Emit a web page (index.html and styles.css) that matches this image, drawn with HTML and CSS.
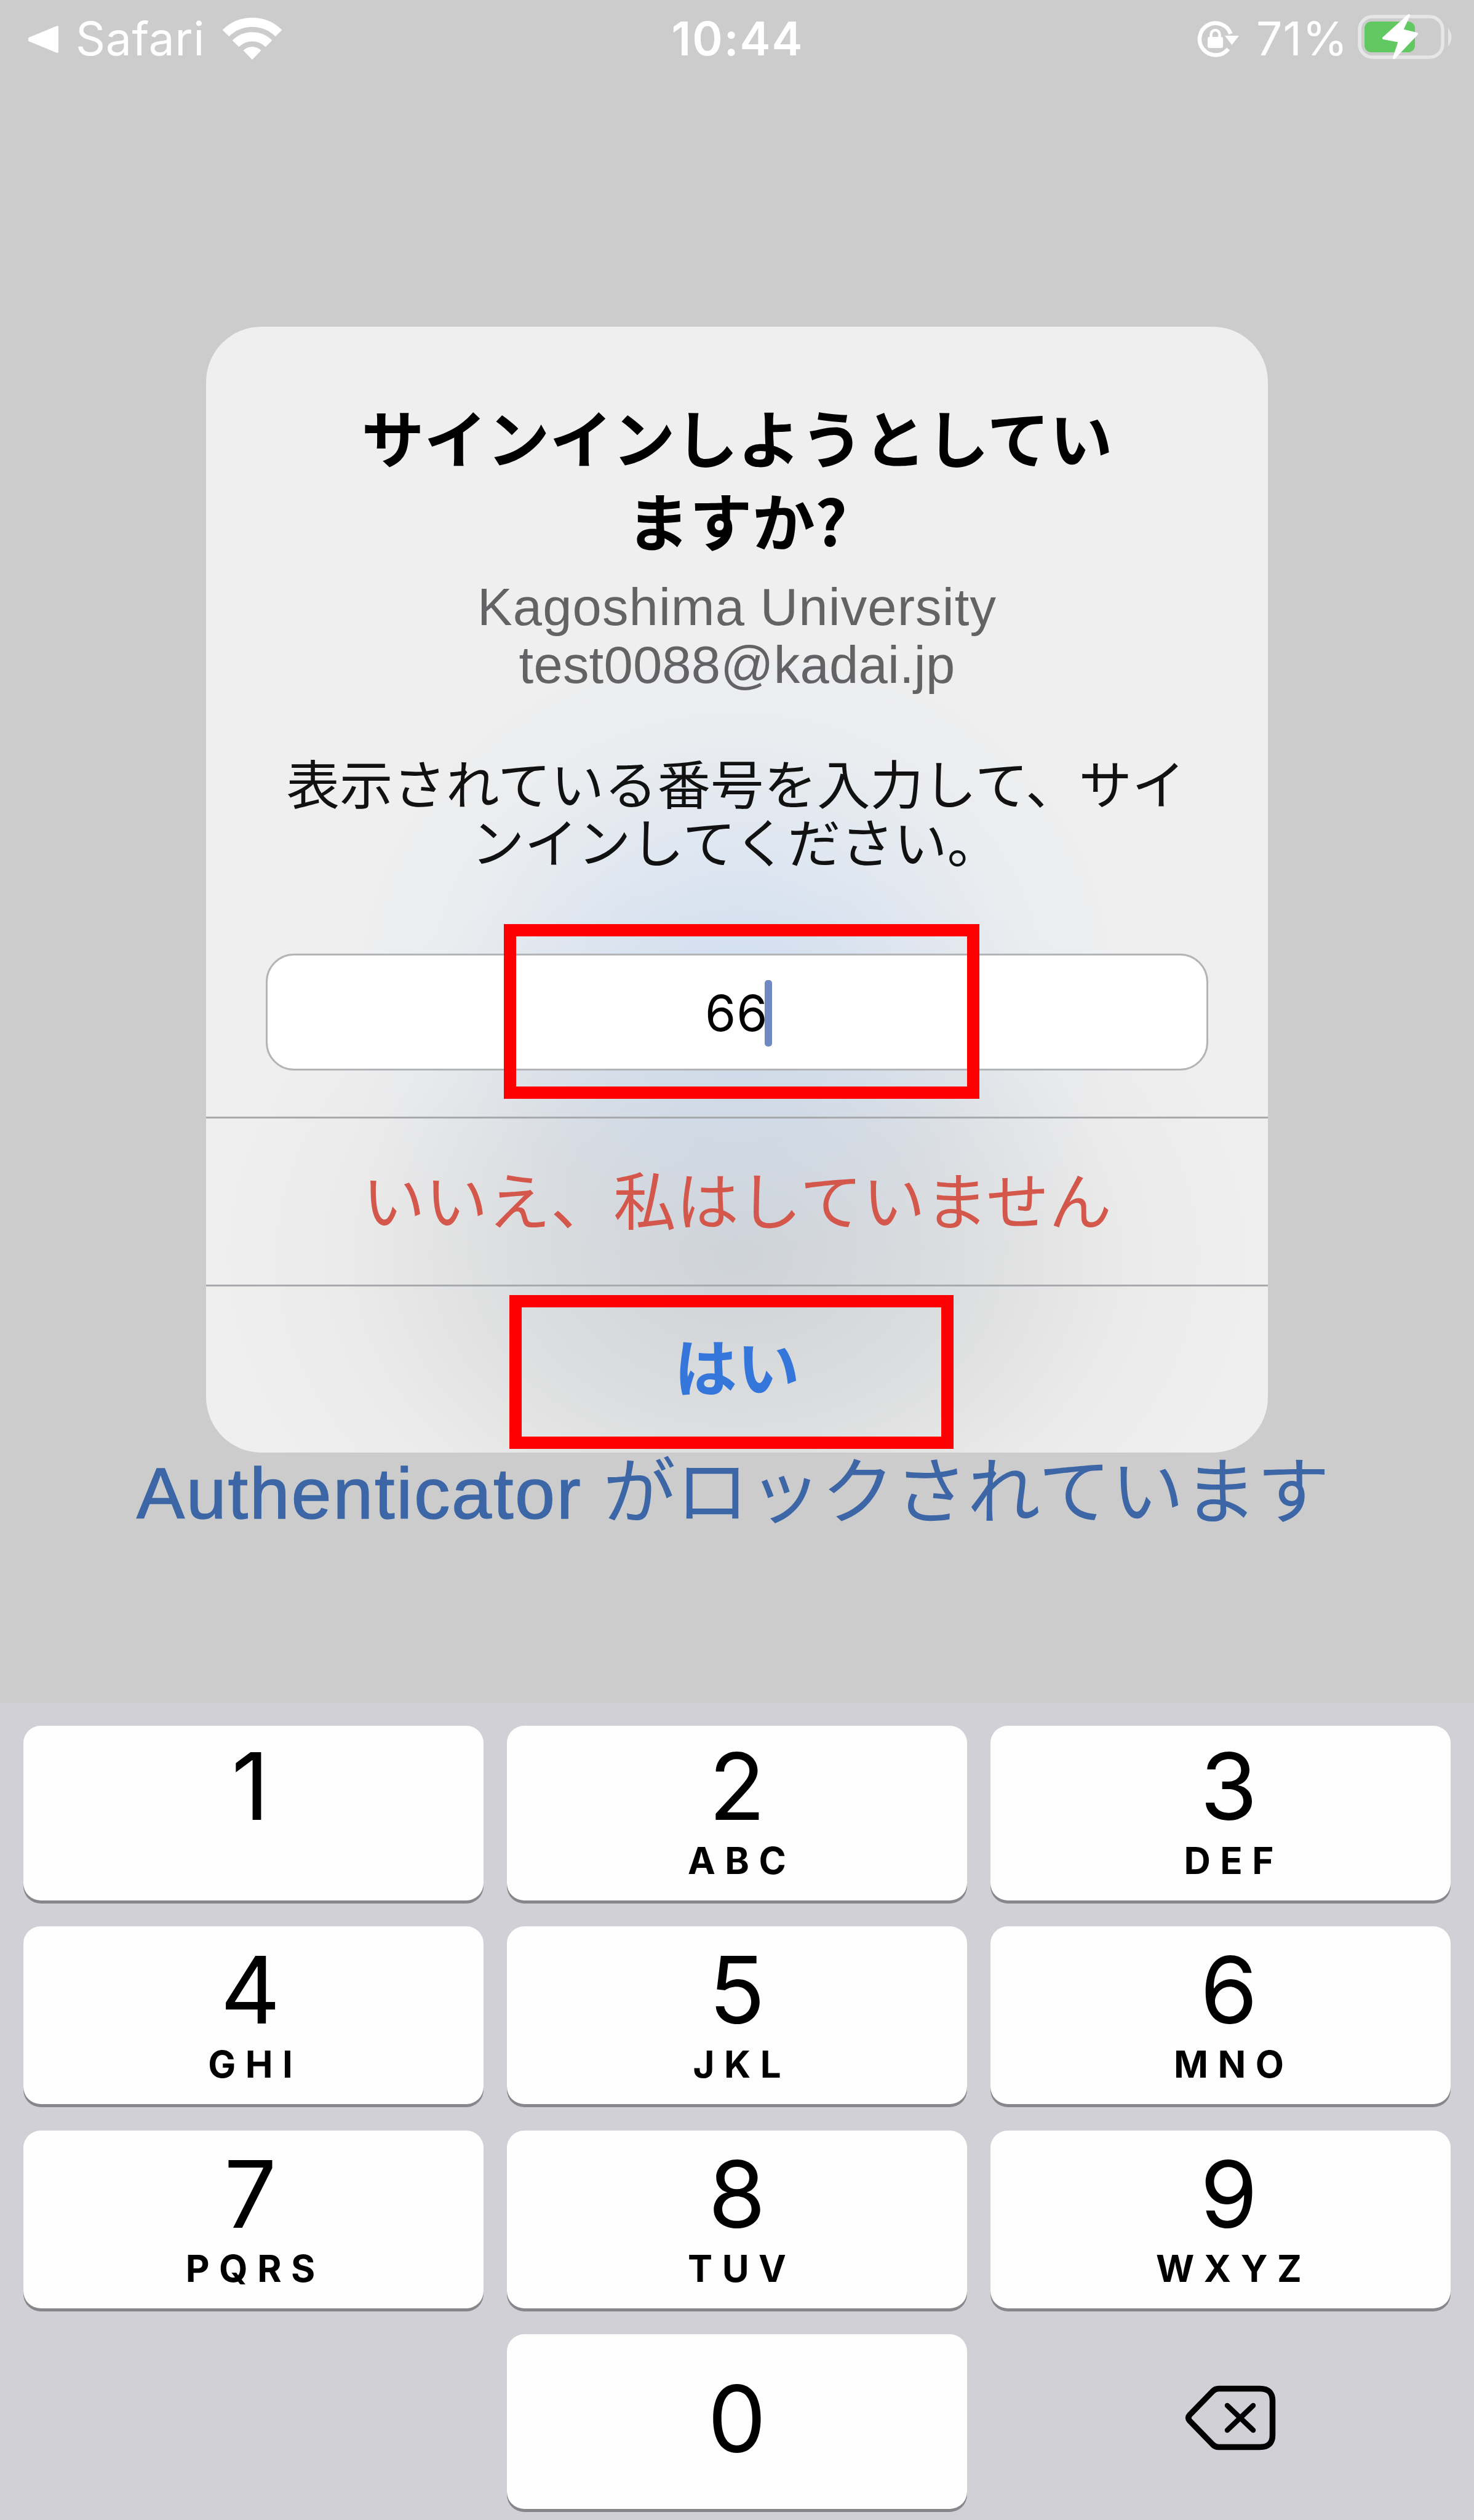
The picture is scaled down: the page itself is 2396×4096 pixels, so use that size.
FILE: index.html
```html
<!DOCTYPE html>
<html lang="ja">
<head>
<meta charset="utf-8">
<title>Authenticator</title>
<link rel="stylesheet" href="styles.css">
</head>
<body>
<div class="screen">
  <header class="status">
    <div class="status-left">
      <svg class="back" width="52" height="46" viewBox="0 0 52 46"><path d="M3 21.5 48 3v40L3 24.500Z" fill="#fff" stroke="#fff" stroke-width="4" stroke-linejoin="round"/></svg>
      <span class="app">Safari</span>
      <svg class="wifi" width="98" height="70" viewBox="0 0 98 70"><g fill="none" stroke="#fff" stroke-width="15"><path d="M6 26a61 61 0 0 1 86 0"/><path d="M22 43a38 38 0 0 1 54 0"/></g><path d="M49 69 34.500 54a20.500 20.500 0 0 1 29 0Z" fill="#fff"/></svg>
    </div>
    <div class="time">10:44</div>
    <div class="status-right">
      <svg class="lock" width="70" height="64" viewBox="0 0 70 64"><path d="M51.500 48.500A26 26 0 1 1 55.500 24" fill="none" stroke="#fff" stroke-width="6.500"/><path d="M46 27h23L57.500 42Z" fill="#fff"/><rect x="18" y="29" width="25" height="18" rx="3" fill="#fff"/><path d="M23.500 30v-5a7 7 0 0 1 14 0v5" fill="none" stroke="#fff" stroke-width="4.500"/></svg>
      <span class="percent">71%</span>
      <svg class="battery" width="156" height="74" viewBox="0 0 156 74"><rect x="3" y="4" width="135" height="66" rx="21" fill="none" stroke="#e6e6e6" stroke-width="5.500"/><path d="M148 26q7 11 0 23Z" fill="#e6e6e6" stroke="#e6e6e6" stroke-width="2"/><rect x="11" y="12" width="82" height="50" rx="11" fill="#62c962"/><path d="m83 2-41 37 26 5-9 27L96 32 72 26Z" fill="#fff" stroke="#fff" stroke-width="4" stroke-linejoin="round"/></svg>
    </div>
  </header>

  <main class="stage">
    <section class="dialog">
      <h1 class="title">サインインしようとしてい<br>ますか?</h1>
      <p class="account">Kagoshima University<br><span class="mail">test0088@kadai.jp</span></p>
      <p class="message">表示されている番号を入力して、サイ<br>ンインしてください。</p>
      <div class="field"><span class="number">66</span><span class="caret"></span></div>
      <div class="action deny">いいえ、私はしていません</div>
      <div class="action accept">はい</div>
      <div class="mark mark-field"></div>
      <div class="mark mark-accept"></div>
    </section>
    <p class="locked"><span class="latin">Authenticator</span><span>がロックされています</span></p>
  </main>

  <div class="keyboard">
    <div class="key left"><b>1</b></div>
    <div class="key"><b>2</b><i>ABC</i></div>
    <div class="key right"><b>3</b><i>DEF</i></div>
    <div class="key left low"><b>4</b><i>GHI</i></div>
    <div class="key low"><b>5</b><i>JKL</i></div>
    <div class="key right low"><b>6</b><i>MNO</i></div>
    <div class="key left low"><b>7</b><i>PQRS</i></div>
    <div class="key low"><b>8</b><i>TUV</i></div>
    <div class="key right low"><b>9</b><i>WXYZ</i></div>
    <div class="blank"></div>
    <div class="key zero"><b>0</b></div>
    <div class="delete">
      <svg width="148" height="106" viewBox="0 0 148 106"><g fill="none" stroke="#000" stroke-linecap="round" stroke-linejoin="round"><path d="M55 5.500H122Q142.500 5.500 142.500 25V81Q142.500 100.500 122 100.500H55Q49 100.500 45 96L8 58Q3.500 53 8 48L45 10Q49 5.500 55 5.500Z" stroke-width="9.500"/><path d="m69 33 42 40M111 33 69 73" stroke-width="8.500"/></g></svg>
    </div>
  </div>
</div>
</body>
</html>
```
FILE: styles.css
```css
* { box-sizing: border-box; }
body, h1, p { margin: 0; }

body {
  background: #ccc;
  font-family: "Noto Sans CJK JP", sans-serif;
}

.screen {
  width: 2396px;
  height: 4096px;
  display: flex;
  flex-direction: column;
  overflow: hidden;
  background: #ccc;
}

/* Status bar */
.status {
  height: 125px;
  flex: none;
  display: grid;
  grid-template-columns: 1fr auto 1fr;
  align-items: center;
  padding: 0 33px 0 45px;
  color: #fff;
  font: 400 75px/125px Inter, sans-serif;
}
.status svg { flex: none; }
.status-left, .status-right { display: flex; align-items: center; }
.status-right { justify-content: flex-end; }
.app { margin-left: 26px; width: 238px; letter-spacing: .6px; }
.time { font-weight: 600; letter-spacing: 2px; margin-right: 10px; }
.percent { width: 165px; margin-left: 27px; letter-spacing: 1px; }
.back { margin-top: 3px; }
.battery { margin-top: -5px; }

/* Alert */
.stage {
  flex: 1;
  display: flex;
  flex-direction: column;
  padding-top: 406px;
}
.dialog {
  position: relative;
  width: 1726px;
  height: 1830px;
  flex: none;
  margin-left: 335px;
  padding-top: 110px;
  border-radius: 90px;
  overflow: hidden;
  text-align: center;
  background:
    radial-gradient(ellipse 660px 600px at 50% 1080px, rgba(190, 214, 243, .6), rgba(194, 216, 243, .4) 35%, rgba(205, 220, 242, .13) 72%, rgba(220, 230, 245, 0)),
    radial-gradient(ellipse 860px 640px at 50% 1510px, rgba(196, 200, 204, .75), rgba(204, 206, 208, .56) 40%, rgba(218, 218, 219, .2) 75%, rgba(230, 230, 230, 0)),
    #efefef;
}
.title {
  font-size: 102px;
  font-weight: 700;
  line-height: 135.3px;
  color: #000;
}
.account {
  margin-top: 28px;
  font: 400 85px/94.300px "Liberation Sans", sans-serif;
  letter-spacing: 1.100px;
  color: #636365;
}
.mail { letter-spacing: .2px; }
.message {
  margin: 95px -20px 0 -24px;
  font-size: 86.500px;
  line-height: 95px;
  color: #111;
}
.field {
  display: flex;
  align-items: center;
  width: 1532px;
  height: 190px;
  margin: 137px 0 75px 97px;
  padding-left: 711px;
  border: 3px solid #b2b4b8;
  border-radius: 46px;
  background: #fff;
  font: 400 81px/184px Inter, sans-serif;
  color: #000;
}
.number { width: 97px; letter-spacing: 1px; margin-top: 3px; }
.caret {
  width: 12px;
  height: 108px;
  margin-top: 4px;
  border-radius: 5px;
  background: #7189c2;
}
.action {
  display: flex;
  align-items: center;
  justify-content: center;
  height: 273px;
  border-top: 3px solid #a8a9ad;
  padding-bottom: 13px;
  font-size: 102px;
}
.deny { color: #d4574c; }
.accept { font-weight: 700; color: #3576db; padding-bottom: 17px; }

/* Highlight frames over the alert */
.mark { position: absolute; border: 20px solid #f00; }
.mark-field { left: 484px; top: 971px; width: 773px; height: 284px; }
.mark-accept { left: 493px; top: 1574px; width: 722px; height: 250px; }

.locked {
  display: flex;
  padding-left: 222px;
  font-size: 118.5px;
  line-height: 110px;
  white-space: nowrap;
  color: #3c66a5;
}
.latin {
  width: 758px;
  font-family: "Liberation Sans", "Noto Sans CJK JP", sans-serif;
  font-size: 117px;
  letter-spacing: 2.700px;
  padding-top: 12px;
  -webkit-text-stroke: 1.500px #3c66a5;
}

/* Number pad */
.keyboard {
  flex: none;
  height: 1328px;
  display: grid;
  grid-template: 284px 289px 289px 284px / repeat(3, 748px);
  gap: 42.300px 38px;
  padding: 37px 38px 0;
  background: #d1d0d6;
  font-family: Inter, sans-serif;
  color: #000;
}
.key {
  display: flex;
  flex-direction: column;
  align-items: center;
  padding-top: 23px;
  border-radius: 28px;
  background: #fefefe;
  box-shadow: 0 5px 0 #87868b;
}
.key.low { padding-top: 28px; }
.key.left { padding-right: 10px; }
.key.right { padding-left: 27px; }
.key.zero { padding-top: 62px; }
.key b { font-size: 151px; font-weight: 400; line-height: 150px; }
.key i {
  font-size: 60px;
  font-style: normal;
  font-weight: 700;
  line-height: 60px;
  letter-spacing: 15.500px;
  margin-right: -15.500px;
  margin-top: 16px;
}
.delete { display: flex; padding: 83px 0 0 316px; }
```
